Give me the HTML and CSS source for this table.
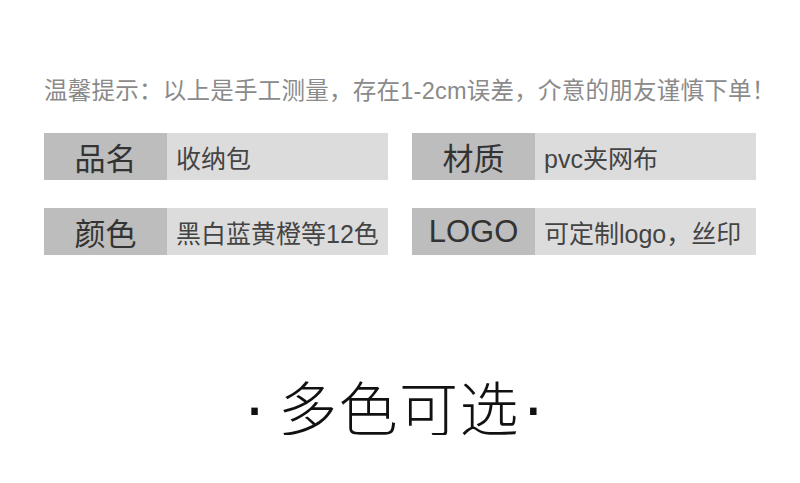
FILE: index.html
```html
<!DOCTYPE html>
<html>
<head>
<meta charset="utf-8">
<title>收纳包 参数</title>
<link rel="stylesheet" href="styles.css">
</head>
<body>

<div class="page">
	<p class="notice">温馨提示：以上是手工测量，存在1-2cm误差，介意的朋友谨慎下单！</p>

	<div class="specs">
		<div class="spec">
			<span class="spec-label">品名</span>
			<span class="spec-value">收纳包</span>
		</div>
		<div class="spec">
			<span class="spec-label">材质</span>
			<span class="spec-value">pvc夹网布</span>
		</div>
		<div class="spec">
			<span class="spec-label">颜色</span>
			<span class="spec-value">黑白蓝黄橙等12色</span>
		</div>
		<div class="spec">
			<span class="spec-label">LOGO</span>
			<span class="spec-value">可定制logo，丝印</span>
		</div>
	</div>

	<h2 class="title"><span class="dot dot-left">·</span><span class="title-text">多色可选</span><span class="dot dot-right">·</span></h2>
</div>

</body>
</html>
```

FILE: styles.css
```css
body {
	margin: 0;
	background: #fff;
	font-family: "Liberation Sans", "Noto Sans CJK SC", sans-serif;
}

.page {
	padding: 79px 44px 0;
}

/* 提示文字 */
.notice {
	margin: 0;
	font-size: 23.5px;
	line-height: 24px;
	letter-spacing: 0.25px;
	color: #8a8a8a;
	white-space: nowrap;
}

/* 参数表 */
.specs {
	display: grid;
	grid-template-columns: 344px 344px;
	gap: 28px 24px;
	margin-top: 30px;
}

.spec {
	display: flex;
	height: 47px;
}

.spec-label {
	width: 123px;
	display: flex;
	align-items: center;
	justify-content: center;
	background-color: #bdbdbd;
	color: #333;
	font-size: 31px;
}

.spec-value {
	flex: 1;
	display: flex;
	align-items: center;
	padding-left: 9px;
	background-color: #dcdcdc;
	color: #444;
	font-size: 25px;
}

/* 大标题 */
.title {
	margin: 121px 0 0;
	padding-right: 12px;
	text-align: center;
	font-family: "Noto Sans CJK SC", sans-serif;
	font-weight: 300;
	font-size: 59px;
	line-height: 59px;
	color: #111;
	white-space: nowrap;
}

.title-text {
	letter-spacing: 1.5px;
}

.title .dot {
	font-family: "Liberation Sans", sans-serif;
	font-weight: 400;
	font-size: 68px;
	line-height: 0;
	vertical-align: 1px;
}

.dot-left {
	margin-right: 12px;
}

.dot-right {
	margin-left: 2px;
}
```
